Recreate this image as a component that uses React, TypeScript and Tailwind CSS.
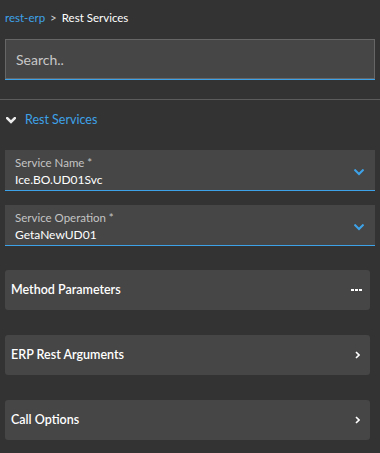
import React from "react";

const BLUE = "#3ea2e8";

function ChevronDown({ color, className, sw = 2 }: { color: string; className?: string; sw?: number }) {
  return (
    <svg className={className} width="10" height="7" viewBox="0 0 10 7" fill="none">
      <path d="M1.2 1.2 L5 5 L8.8 1.2" stroke={color} strokeWidth={sw} strokeLinecap="square" />
    </svg>
  );
}

function ChevronRight() {
  return (
    <svg width="5" height="8" viewBox="0 0 5 8" fill="none">
      <path d="M1 1 L4 4 L1 7" stroke="#ffffff" strokeWidth="1.6" />
    </svg>
  );
}

function Field({ label, value, className }: { label: string; value: string; className?: string }) {
  return (
    <div className={`mx-[5px] h-[41px] bg-[#464646] border-b border-[#3ea2e8] flex items-start justify-between ${className ?? ""}`}>
      <div className="pl-[10px] pt-[6px] flex flex-col">
        <span className="text-[11.5px] leading-[14px] text-[#c4c4c4]">{label}</span>
        <span className="mt-[2px] text-[12px] leading-[16px] text-white">{value}</span>
      </div>
      <div className="pr-[11px] pt-[19px]">
        <ChevronDown color={BLUE} />
      </div>
    </div>
  );
}

function Section({ title, icon, className }: { title: string; icon: React.ReactNode; className?: string }) {
  return (
    <div className={`ml-[5px] w-[365px] h-[40px] rounded-[3px] bg-[#464646] flex items-center justify-between pl-[6px] pr-[10px] ${className ?? ""}`}>
      <span className="text-[12.5px] font-semibold text-white">{title}</span>
      {icon}
    </div>
  );
}

function Dots() {
  return (
    <div className="flex gap-[1px] mr-[-2px]">
      <span className="w-[3px] h-[2px] bg-white" />
      <span className="w-[3px] h-[2px] bg-white" />
      <span className="w-[3px] h-[2px] bg-white" />
    </div>
  );
}

export default function App() {
  return (
    <div
      className="w-[380px] h-[453px] bg-[#333333] overflow-hidden"
      style={{ fontFamily: "Lato, 'Open Sans', sans-serif" }}
    >
      <div className="px-[5px] pt-[10px] h-[26px] text-[11.5px] leading-[16px] flex items-center gap-[5px]">
        <span className="text-[#3ea2e8]">rest-erp</span>
        <span className="text-[#cfcfcf]">&gt;</span>
        <span className="text-white">Rest Services</span>
      </div>

      <div className="mx-[5px] mt-[13px] border-b border-[#3ea2e8]">
        <div className="h-[40px] border border-[#666666] bg-[#464646] flex items-center pl-[10px]">
          <span className="text-[14px] text-[#c8c8c8]">Search..</span>
        </div>
      </div>

      <div className="mt-[19px] h-px bg-[#5c5c5c]" />

      <div className="h-[40px] flex items-center pl-[6px]">
        <ChevronDown color="#ececec" sw={2.6} />
        <span className="ml-[9px] text-[12.5px] text-[#3ea2e8]">Rest Services</span>
      </div>

      <Field label="Service Name *" value="Ice.BO.UD01Svc" className="mt-[10px]" />
      <Field label="Service Operation *" value="GetaNewUD01" className="mt-[14px]" />

      <Section title="Method Parameters" icon={<Dots />} className="mt-[24px]" />
      <Section title="ERP Rest Arguments" icon={<ChevronRight />} className="mt-[25px]" />
      <Section title="Call Options" icon={<ChevronRight />} className="mt-[25px]" />
    </div>
  );
}
